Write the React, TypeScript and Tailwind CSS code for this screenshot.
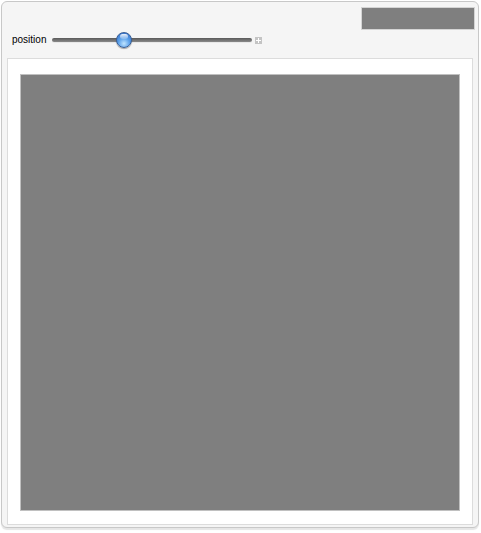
import React from "react";

export default function App() {
  return (
    <div className="w-[481px] h-[533px] bg-white p-px" style={{ fontFamily: '"Liberation Sans", Arial, sans-serif' }}>
      <div className="w-[478px] h-[527px] rounded-[6px] border border-[#c8c8c8] bg-[#f5f5f5] shadow-[0_2px_1px_#e6e6e6] flex flex-col">
        <div className="flex justify-end pt-[5px] pr-[3px]">
          <div className="w-[114px] h-[23px] bg-[#7f7f7f] border border-[#d4d4d4]" />
        </div>
        <div className="flex items-center h-[18px] pl-[10px] mt-[1px]">
          <span className="text-[10px] leading-none text-black">position</span>
          <div className="relative ml-[6px] w-[200px] h-[18px] flex items-center">
            <div className="w-full h-[4px] rounded-full bg-gradient-to-b from-[#5a5a5a] to-[#8a8a8a] shadow-[0_1px_0_#e8e8e8]" />
            <div className="absolute left-[64px] top-px w-[16px] h-[16px] rounded-full border border-[#3a5f95] bg-[radial-gradient(circle_at_50%_75%,#bfe4ff_0%,#5aa0ea_45%,#2a64c4_100%)] shadow-[0_1px_1px_rgba(0,0,0,0.35)]">
              <div className="absolute left-[3px] top-[1px] w-[8px] h-[5px] rounded-full bg-gradient-to-b from-white/90 to-white/20" />
            </div>
          </div>
          <div className="ml-[3px] w-[7px] h-[7px] bg-[#c4c4c4] flex items-center justify-center">
            <svg width="5" height="5" viewBox="0 0 5 5">
              <path d="M2.5 0V5M0 2.5H5" stroke="white" strokeWidth="1" />
            </svg>
          </div>
        </div>
        <div className="mt-[9px] ml-[5px] w-[466px] h-[467px] bg-white border border-[#dcdcdc] pt-[15px] pl-[12px]">
          <div className="w-[440px] h-[437px] bg-[#7f7f7f] border border-[#c0c0c0]" />
        </div>
      </div>
    </div>
  );
}
